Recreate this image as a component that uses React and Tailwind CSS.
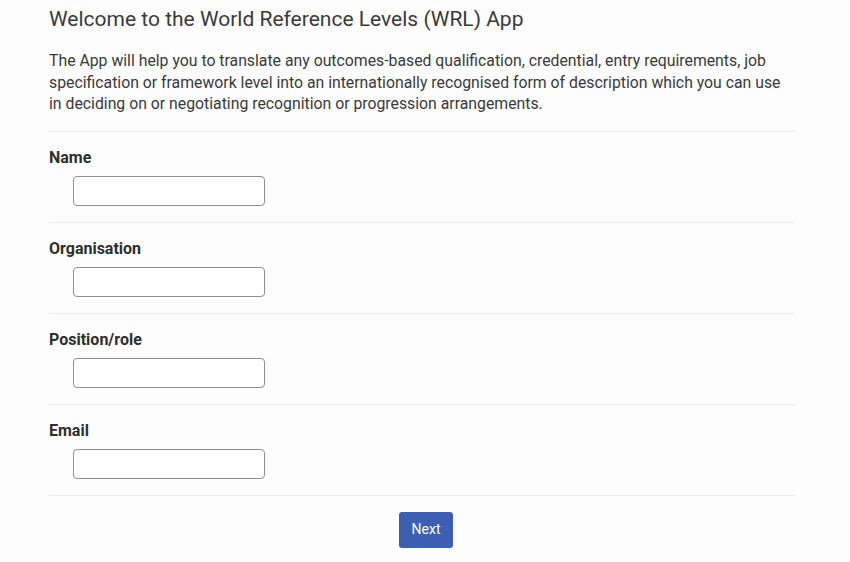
import React from "react";

const fields = ["Name", "Organisation", "Position/role", "Email"];

export default function App() {
  return (
    <div className="min-h-[562px] bg-[#fdfdfd] font-['Roboto',sans-serif] text-[#333]">
      <div className="ml-[49px] w-[746px] pt-[5px]">
        <h1 className="text-[21px] leading-[28px] font-normal text-[#3a3a3a]">
          Welcome to the World Reference Levels (WRL) App
        </h1>
        <p className="mt-[17px] text-[15.8px] leading-[21.5px] text-[#3a3a3a]">
          The App will help you to translate any outcomes-based qualification, credential, entry requirements, job
          specification or framework level into an internationally recognised form of description which you can use
          in deciding on or negotiating recognition or progression arrangements.
        </p>
        <div className="mt-[16px]">
          {fields.map((f) => (
            <div key={f} className="border-t border-[#ececec] pt-[16px] pb-[16px]">
              <label className="block text-[16px] leading-[20px] font-bold text-[#2e2e2e]">{f}</label>
              <input
                type="text"
                className="ml-[24px] mt-[8px] block h-[30px] w-[192px] rounded-[4px] border-[1.5px] border-[#8f8f8f] bg-white"
              />
            </div>
          ))}
          <div className="border-t border-[#ececec]" />
        </div>
      </div>
      <div className="flex justify-center pt-[16px] pl-[2px]">
        <button className="h-[36px] w-[54px] rounded-[3px] bg-[#3c5fb3] text-[14px] text-white">Next</button>
      </div>
    </div>
  );
}
